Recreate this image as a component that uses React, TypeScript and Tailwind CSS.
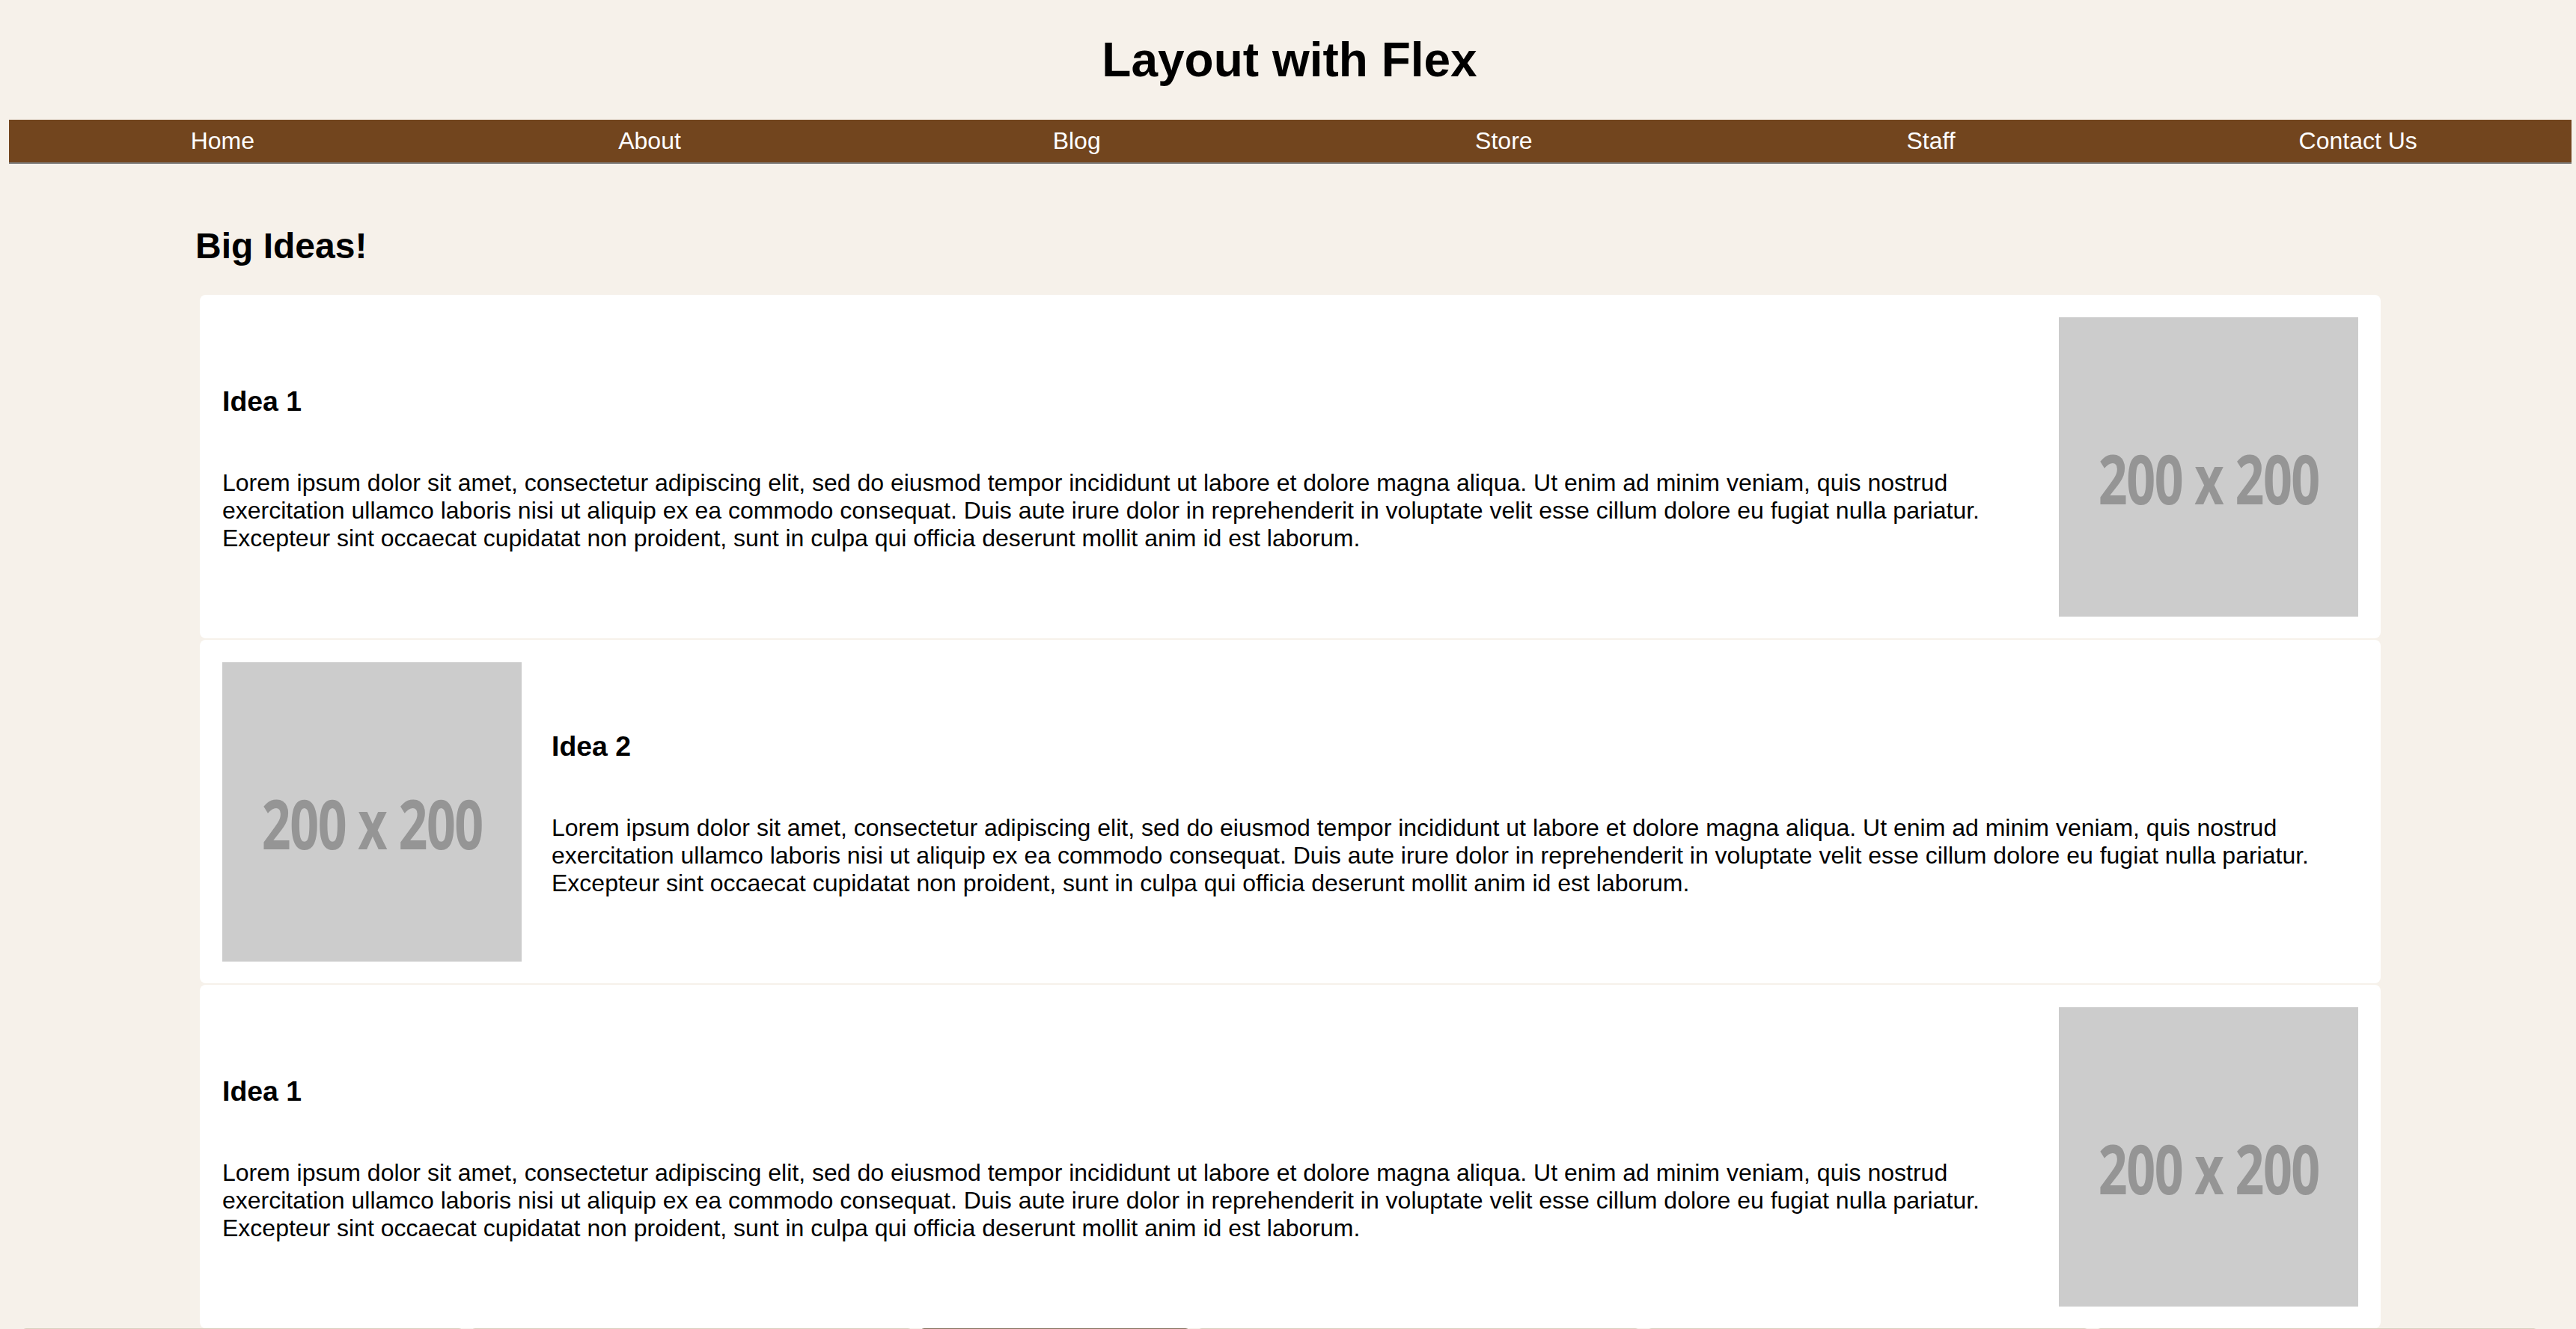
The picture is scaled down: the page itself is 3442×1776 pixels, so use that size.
import React from 'react';

const LOREM =
  'Lorem ipsum dolor sit amet, consectetur adipiscing elit, sed do eiusmod tempor incididunt ut labore et dolore magna aliqua. Ut enim ad minim veniam, quis nostrud exercitation ullamco laboris nisi ut aliquip ex ea commodo consequat. Duis aute irure dolor in reprehenderit in voluptate velit esse cillum dolore eu fugiat nulla pariatur. Excepteur sint occaecat cupidatat non proident, sunt in culpa qui officia deserunt mollit anim id est laborum.';

const navItems = ['Home', 'About', 'Blog', 'Store', 'Staff', 'Contact Us'];

const Placeholder: React.FC = () => (
  <div className="flex h-[400px] w-[400px] shrink-0 items-center justify-center bg-[#cccccc]">
    <span className="pt-[30px] font-['Open_Sans',sans-serif] text-[92px] font-bold leading-none tracking-[-2px] text-[#959595] scale-x-[0.74]">
      200 x 200
    </span>
  </div>
);

interface IdeaProps {
  title: string;
  imageLeft?: boolean;
}

const IdeaCard: React.FC<IdeaProps> = ({ title, imageLeft }) => (
  <div className="flex h-[459px] items-center gap-[40px] rounded-[8px] bg-white px-[30px]">
    {imageLeft && <Placeholder />}
    <div className="flex flex-1 flex-col">
      <h3 className="my-[37.4px] text-[37.4px] font-bold leading-[normal]">{title}</h3>
      <p className="my-[32px] text-[32px] leading-[normal]">{LOREM}</p>
    </div>
    {!imageLeft && <Placeholder />}
  </div>
);

export default function App() {
  return (
    <div className="min-h-screen overflow-hidden bg-[#f6f1ea] font-['Liberation_Sans',Arial,sans-serif] text-black">
      <h1 className="pt-[43px] pl-[4px] text-center text-[64px] font-bold leading-[74px]">Layout with Flex</h1>

      <nav className="mt-[43px] ml-[12px] mr-[6px] flex border-b-2 border-[#808080] bg-[#72451e] py-[10px]">
        {navItems.map((item) => (
          <a key={item} className="flex-1 text-center text-[32px] leading-[normal] text-white">
            {item}
          </a>
        ))}
      </nav>

      <main className="pl-[261px] pr-[261px]">
        <h2 className="mt-[82px] mb-[38px] text-[48px] font-bold leading-[normal]">Big Ideas!</h2>
        <div className="flex flex-col gap-[2px] pl-[6px]">
          <IdeaCard title="Idea 1" />
          <IdeaCard title="Idea 2" imageLeft />
          <IdeaCard title="Idea 1" />
        </div>
      </main>

      <div className="mx-[29px] flex gap-[10px] pr-[22px]">
        <div className="h-[200px] flex-1 rounded-t-[6px] bg-[#d9d0bf]" />
        <div className="h-[200px] flex-1 rounded-t-[6px] bg-[#d9d0bf]" />
        <div className="h-[200px] w-[361px] rounded-t-[6px] bg-[#84725f]" />
        <div className="h-[200px] flex-1 rounded-t-[6px] bg-[#d9d0bf]" />
        <div className="h-[200px] flex-1 rounded-t-[6px] bg-[#d9d0bf]" />
        <div className="h-[200px] flex-1 rounded-t-[6px] bg-[#d9d0bf]" />
      </div>
    </div>
  );
}
